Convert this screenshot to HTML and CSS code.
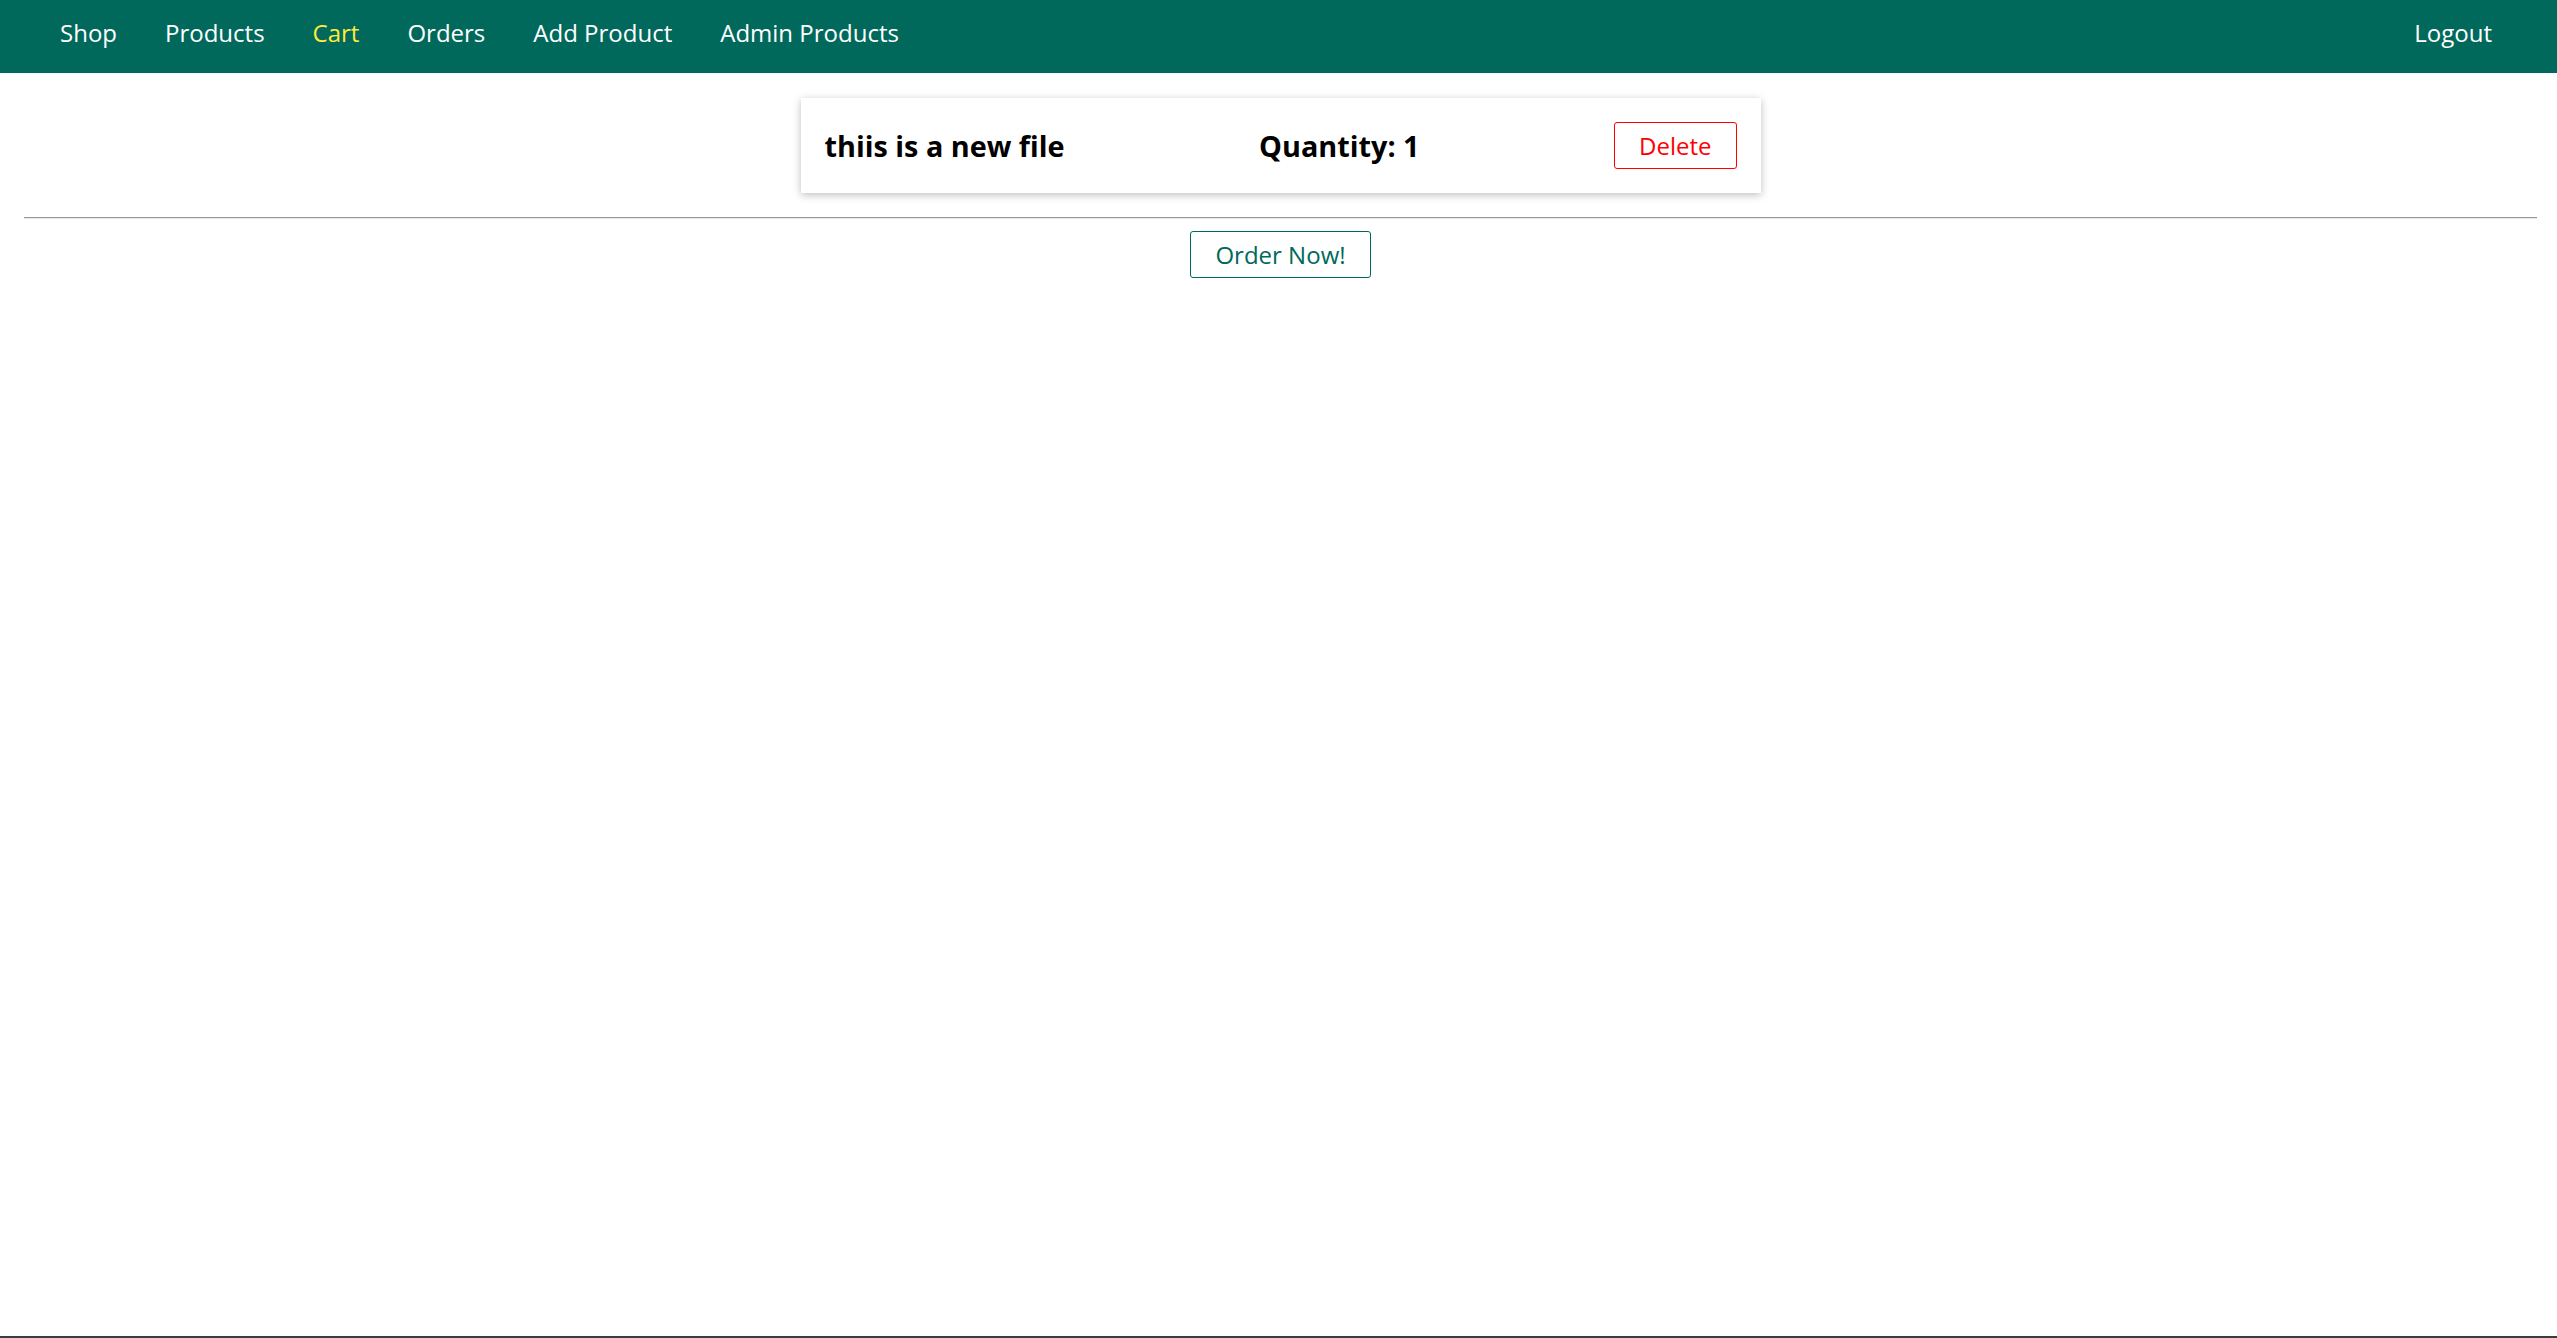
FILE: index.html
```html
<!DOCTYPE html>
<html lang="en">
<head>
<meta charset="UTF-8">
<title>Your Cart</title>
<link rel="stylesheet" href="styles.css">
</head>
<body>
<div class="page">
  <header class="main-header">
    <nav class="main-header__nav">
      <ul class="main-header__item-list">
        <li class="main-header__item"><a href="#">Shop</a></li>
        <li class="main-header__item"><a href="#">Products</a></li>
        <li class="main-header__item"><a class="active" href="#">Cart</a></li>
        <li class="main-header__item"><a href="#">Orders</a></li>
        <li class="main-header__item"><a href="#">Add Product</a></li>
        <li class="main-header__item"><a href="#">Admin Products</a></li>
      </ul>
      <ul class="main-header__item-list">
        <li class="main-header__item"><a href="#">Logout</a></li>
      </ul>
    </nav>
  </header>
  <main class="main">
    <ul class="cart__item-list">
      <li class="cart__item">
        <h1>thiis is a new file</h1>
        <h2>Quantity: 1</h2>
        <button class="btn danger" type="button">Delete</button>
      </li>
    </ul>
    <hr class="divider">
    <div class="centered">
      <button class="btn" type="button">Order Now!</button>
    </div>
  </main>
  <div class="frame-edge"></div>
</div>
</body>
</html>
```

FILE: styles.css
```css
* {
  box-sizing: border-box;
}

html, body {
  margin: 0;
  padding: 0;
}

body {
  font-family: "Open Sans", "Noto Sans", sans-serif;
  font-size: 24px;
  background: #ffffff;
  color: #000000;
}

.page {
  min-height: 100vh;
  display: flex;
  flex-direction: column;
}

.main-header {
  height: 73px;
  background: #00695c;
  padding: 16px 41px 0 36px;
}

.main-header__nav {
  display: flex;
  justify-content: space-between;
  align-items: flex-start;
}

.main-header__item-list {
  list-style: none;
  margin: 0;
  padding: 0;
  display: flex;
}

.main-header__item {
  margin: 0 24px;
  line-height: normal;
}

.main-header__item a {
  text-decoration: none;
  color: #ffffff;
}

.main-header__item a.active {
  color: #ffeb3b;
}

.main {
  flex: 1;
  padding: 25px 20px 0 24px;
}

.cart__item-list {
  list-style: none;
  margin: 0 auto;
  padding: 0;
  width: 960px;
}

.cart__item {
  display: flex;
  justify-content: space-between;
  align-items: center;
  padding: 24px;
  background: #ffffff;
  box-shadow: 0 2px 8px rgba(0, 0, 0, 0.26);
}

.cart__item h1,
.cart__item h2 {
  margin: 0;
  font-size: 28.8px;
  font-weight: 700;
}

.divider {
  margin: 24px 0 12px;
  height: 0;
  border: 0;
  border-top: 1px solid #9a9a9a;
  border-bottom: 1px solid #e6e6e6;
}

.centered {
  text-align: center;
}

.btn {
  font: inherit;
  line-height: normal;
  border: 1px solid #00695c;
  color: #00695c;
  background: #ffffff;
  border-radius: 3px;
  padding: 6px 24px;
  cursor: pointer;
}

.btn.danger {
  color: #ff0000;
  border-color: #ff0000;
}

.frame-edge {
  height: 2px;
  background: #3c3c3c;
}
```
